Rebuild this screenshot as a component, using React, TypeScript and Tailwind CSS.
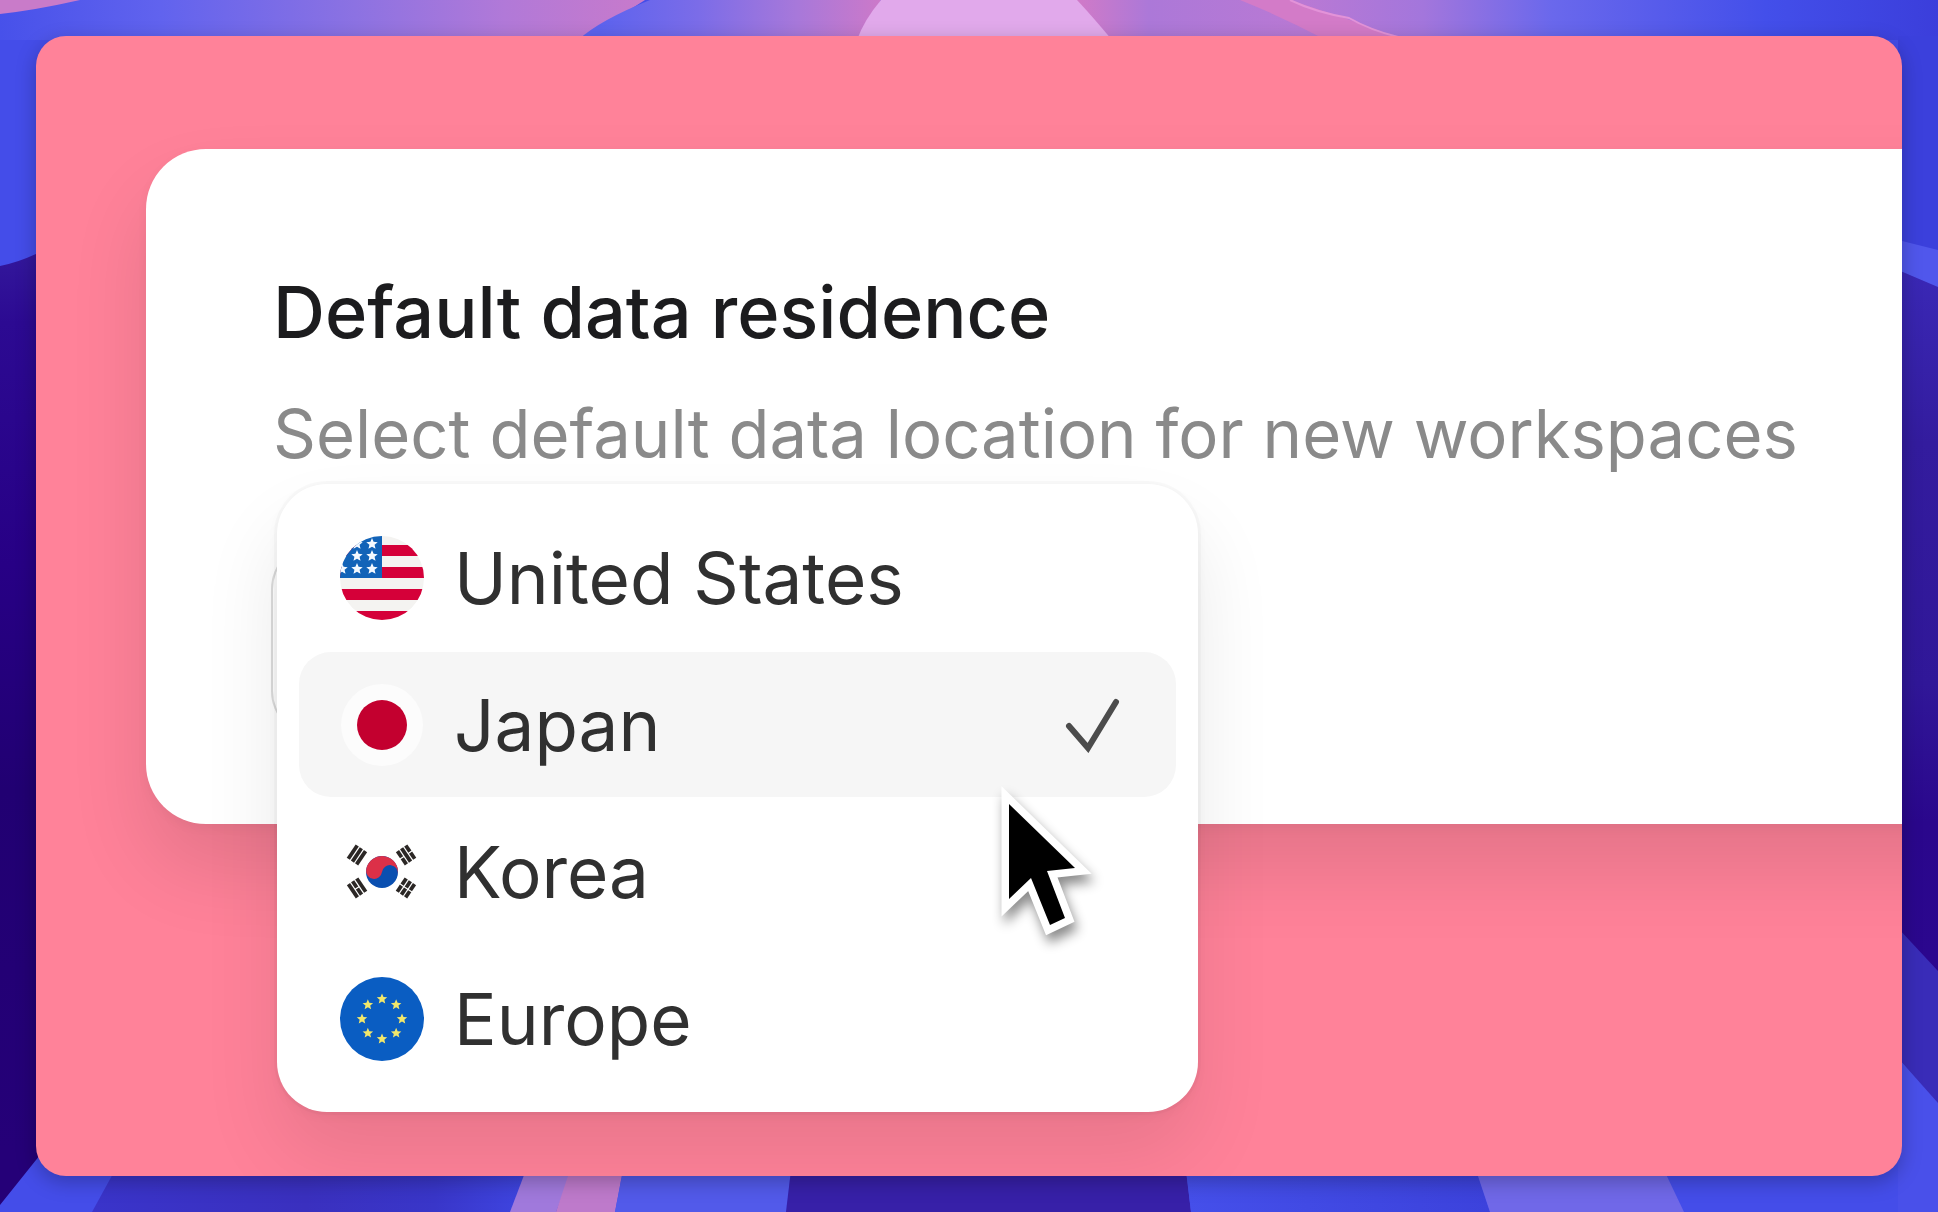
import { useState } from "react";
import type { ReactNode } from "react";

const star = (cx: number, cy: number, r: number) =>
  Array.from({ length: 10 }, (_, i) => {
    const radius = i % 2 === 0 ? r : r * 0.45;
    const a = (Math.PI / 5) * i - Math.PI / 2;
    return `${cx + radius * Math.cos(a)},${cy + radius * Math.sin(a)}`;
  }).join(" ");

function FlagUS() {
  return (
    <svg viewBox="0 0 84 84" className="size-[84px] shrink-0" aria-hidden="true">
      <clipPath id="us"><circle cx="42" cy="42" r="42" /></clipPath>
      <g clipPath="url(#us)">
        <rect width="84" height="84" fill="#f4f3f1" />
        {[9, 31, 53, 75].map((y) => <rect key={y} y={y} width="84" height="11" fill="#d50039" />)}
        <rect width="42" height="42" fill="#1263b8" />
        {[[17, 8], [32, 8], [17, 20], [32, 20], [2, 33], [17, 33], [32, 33]].map(([x, y]) => (
          <polygon key={`${x}-${y}`} points={star(x, y, 6)} fill="#f4f9ff" />
        ))}
      </g>
    </svg>
  );
}

function FlagJP() {
  return (
    <svg viewBox="0 0 84 84" className="size-[84px] shrink-0" aria-hidden="true">
      <circle cx="42" cy="42" r="41" fill="#fcfcfc" />
      <circle cx="42" cy="42" r="25" fill="#c3002f" />
    </svg>
  );
}

function Trigram({ x, y, angle, rows }: { x: number; y: number; angle: number; rows: boolean[] }) {
  return (
    <g transform={`translate(${x} ${y}) rotate(${angle})`} fill="#2b2725">
      {rows.map((broken, i) => {
        const top = i * 5 - 7;
        return broken ? (
          <g key={i}>
            <rect x="-8" y={top} width="7.4" height="3.8" />
            <rect x="0.6" y={top} width="7.4" height="3.8" />
          </g>
        ) : (
          <rect key={i} x="-8" y={top} width="16" height="3.8" />
        );
      })}
    </g>
  );
}

function FlagKR() {
  return (
    <svg viewBox="0 0 84 84" className="size-[84px] shrink-0" aria-hidden="true">
      <circle cx="42" cy="42" r="16" fill="#0a4fb0" />
      <path d="M26 42a16 16 0 0 1 32 0a8 8 0 0 0-16 0a8 8 0 0 1-16 0z" fill="#dc3048" transform="rotate(8 42 42)" />
      <Trigram x={17} y={25} angle={-56} rows={[false, false, false]} />
      <Trigram x={66} y={25} angle={56} rows={[true, false, true]} />
      <Trigram x={17} y={58} angle={56} rows={[false, true, false]} />
      <Trigram x={66} y={58} angle={-56} rows={[true, true, true]} />
    </svg>
  );
}

function FlagEU() {
  return (
    <svg viewBox="0 0 84 84" className="size-[84px] shrink-0" aria-hidden="true">
      <circle cx="42" cy="42" r="42" fill="#0a5dc2" />
      {Array.from({ length: 8 }, (_, i) => {
        const a = (Math.PI / 4) * i;
        return <polygon key={i} points={star(42 + 20 * Math.cos(a), 42 + 20 * Math.sin(a), 5.5)} fill="#f2e76b" />;
      })}
    </svg>
  );
}

const regions: { id: string; name: string; flag: ReactNode }[] = [
  { id: "us", name: "United States", flag: <FlagUS /> },
  { id: "jp", name: "Japan", flag: <FlagJP /> },
  { id: "kr", name: "Korea", flag: <FlagKR /> },
  { id: "eu", name: "Europe", flag: <FlagEU /> },
];

function Wallpaper() {
  return (
    <svg viewBox="0 0 1938 1212" preserveAspectRatio="none" className="absolute inset-0 size-full" aria-hidden="true">
      <defs>
        <linearGradient id="topLeft" gradientUnits="userSpaceOnUse" x1="0" y1="30" x2="645" y2="-10">
          <stop offset="0" stopColor="#4751ea" />
          <stop offset="0.25" stopColor="#6163ee" />
          <stop offset="0.55" stopColor="#8c72e2" />
          <stop offset="0.78" stopColor="#b179d8" />
          <stop offset="1" stopColor="#c87acb" />
        </linearGradient>
        <linearGradient id="topMid" gradientUnits="userSpaceOnUse" x1="600" y1="0" x2="880" y2="0">
          <stop offset="0" stopColor="#5d63ee" />
          <stop offset="0.35" stopColor="#7b6ce8" />
          <stop offset="0.7" stopColor="#a778da" />
          <stop offset="1" stopColor="#cc79c9" />
        </linearGradient>
        <linearGradient id="topRight" gradientUnits="userSpaceOnUse" x1="1080" y1="0" x2="1938" y2="0">
          <stop offset="0" stopColor="#cf7ac8" />
          <stop offset="0.08" stopColor="#ac78d8" />
          <stop offset="0.26" stopColor="#b979d4" />
          <stop offset="0.4" stopColor="#a376dc" />
          <stop offset="0.55" stopColor="#6a68ec" />
          <stop offset="0.8" stopColor="#434fea" />
          <stop offset="1" stopColor="#3b3edb" />
        </linearGradient>
        <linearGradient id="left" gradientUnits="userSpaceOnUse" x1="0" y1="250" x2="0" y2="1150">
          <stop offset="0" stopColor="#33189c" />
          <stop offset="0.08" stopColor="#2c0a92" />
          <stop offset="0.35" stopColor="#270085" />
          <stop offset="0.6" stopColor="#210072" />
          <stop offset="1" stopColor="#250078" />
        </linearGradient>
        <linearGradient id="right" gradientUnits="userSpaceOnUse" x1="0" y1="270" x2="0" y2="960">
          <stop offset="0" stopColor="#3a28b6" />
          <stop offset="0.25" stopColor="#331c9e" />
          <stop offset="0.6" stopColor="#301798" />
          <stop offset="0.8" stopColor="#2a078c" />
          <stop offset="1" stopColor="#2b078e" />
        </linearGradient>
        <linearGradient id="bottomLeft" gradientUnits="userSpaceOnUse" x1="92" y1="0" x2="520" y2="0">
          <stop offset="0" stopColor="#3a34ca" />
          <stop offset="0.5" stopColor="#3a30bf" />
          <stop offset="0.8" stopColor="#3936c9" />
          <stop offset="1" stopColor="#3e44df" />
        </linearGradient>
        <linearGradient id="bottomRight" gradientUnits="userSpaceOnUse" x1="1186" y1="0" x2="1490" y2="0">
          <stop offset="0" stopColor="#454fea" />
          <stop offset="0.4" stopColor="#414ae4" />
          <stop offset="1" stopColor="#3c42dc" />
        </linearGradient>
      </defs>
      <rect width="1938" height="1212" fill="#444de9" />
      <path d="M0 0H645L582 40H0z" fill="url(#topLeft)" />
      <path d="M0 0H80Q36 10 0 14z" fill="#c97bc9" />
      <path d="M650 0H881L860 40H578Q600 20 650 0z" fill="url(#topMid)" />
      <path d="M1074 0H1938V40H1110z" fill="url(#topRight)" />
      <path d="M881 0H1077Q1092 16 1112 40H857Q864 20 881 0z" fill="#e1a9eb" />
      <path d="M1240 0H1290L1350 20L1398 38H1322Q1280 16 1240 0z" fill="#d37bc8" />
      <path d="M1290 0Q1315 12 1349 18Q1370 30 1398 37" fill="none" stroke="#e393d8" strokeWidth="2" />
      <path d="M0 266Q20 262 40 252V1155L0 1205z" fill="url(#left)" />
      <path d="M1898 36H1938V252L1898 240z" fill="#3b40dc" />
      <path d="M1898 240L1938 250V288L1898 270z" fill="#5057ec" />
      <path d="M1898 270L1938 287V975H1898z" fill="url(#right)" />
      <path d="M1898 928L1938 971V1105L1898 1058z" fill="#392cb8" />
      <path d="M1898 1058L1938 1103V1212H1898z" fill="#4950ea" />
      <path d="M115 1170H526L510 1212H92z" fill="url(#bottomLeft)" />
      <path d="M526 1170H572L556 1212H510z" fill="#a079dc" />
      <path d="M570 1170H623L615 1212H556z" fill="#be7acb" />
      <path d="M623 1170H791L786 1212H615z" fill="#525aea" />
      <path d="M791 1170H1186L1191 1212H786z" fill="#3720a8" />
      <path d="M1186 1170H1476L1490 1212H1191z" fill="url(#bottomRight)" />
      <path d="M1476 1170H1664L1684 1212H1490z" fill="#7068e8" />
    </svg>
  );
}

function Cursor() {
  return (
    <svg viewBox="0 0 112 168" className="pointer-events-none absolute left-[710px] top-[296px] z-20 h-[168px] w-[112px] drop-shadow-[3px_8px_6px_rgba(0,0,0,0.45)]" aria-hidden="true">
      <path
        d="M22 24V119L44 98L63 145L78 138L60 91L88 88z"
        fill="#000"
        stroke="#fff"
        strokeWidth="15"
        strokeMiterlimit="3"
        paintOrder="stroke"
      />
    </svg>
  );
}

export default function App() {
  const [selected, setSelected] = useState("jp");
  const [open, setOpen] = useState(true);

  return (
    <div className="relative flex min-h-screen p-9 font-[Inter,sans-serif]">
      <Wallpaper />
      <main className="relative min-w-0 flex-1 overflow-hidden rounded-[30px] bg-[#ff8299] pl-[110px] pt-[113px] shadow-[0_6px_20px_rgba(0,0,0,0.25)]">
        <section className="-mr-28 rounded-l-[60px] bg-white pb-[89px] pl-[127px] pt-[119px] shadow-[0_4px_12px_rgba(0,0,0,0.04),0_45px_80px_rgba(0,0,0,0.11)]">
          <h1 id="residence" className="whitespace-nowrap text-[72px] font-medium leading-[88px] text-[#1c1c1e]">
            Default data residence
          </h1>
          <p className="mt-[34px] whitespace-nowrap text-[67px] leading-[88px] text-[#8a8a8a]">
            Select default data location for new workspaces
          </p>

          <div className="relative mt-[67px]">
            <button
              type="button"
              aria-labelledby="residence"
              aria-expanded={open}
              onClick={() => setOpen(!open)}
              className="block h-[190px] w-[880px] rounded-[44px] bg-white shadow-[0_0_0_2px_#dcdcdc]"
            />
            {open && (
              <div
                role="listbox"
                aria-labelledby="residence"
                className="absolute -top-[61px] left-1 z-10 flex w-[921px] flex-col gap-0.5 rounded-[50px] bg-white px-[22px] py-[21px] shadow-[0_0_0_3px_rgba(0,0,0,0.02),0_4px_12px_rgba(0,0,0,0.04),0_45px_80px_rgba(0,0,0,0.09)]"
              >
                {regions.map((r) => (
                  <button
                    key={r.id}
                    type="button"
                    role="option"
                    aria-selected={r.id === selected}
                    onClick={() => setSelected(r.id)}
                    className={`flex h-[145px] items-center rounded-[32px] pl-[41px] pr-[56px] text-left text-[71px] leading-[88px] text-[#303030] ${r.id === selected ? "bg-[#f6f6f6]" : ""}`}
                  >
                    {r.flag}
                    <span className="ml-[30px] flex-1">{r.name}</span>
                    {r.id === selected && (
                      <svg viewBox="0 0 56 56" className="size-14" fill="none" stroke="#4c4c4c" strokeWidth="6" strokeLinecap="round" aria-hidden="true">
                        <path d="M5 29L24 51L52 5" />
                      </svg>
                    )}
                  </button>
                ))}
                <Cursor />
              </div>
            )}
          </div>
        </section>
      </main>
    </div>
  );
}
